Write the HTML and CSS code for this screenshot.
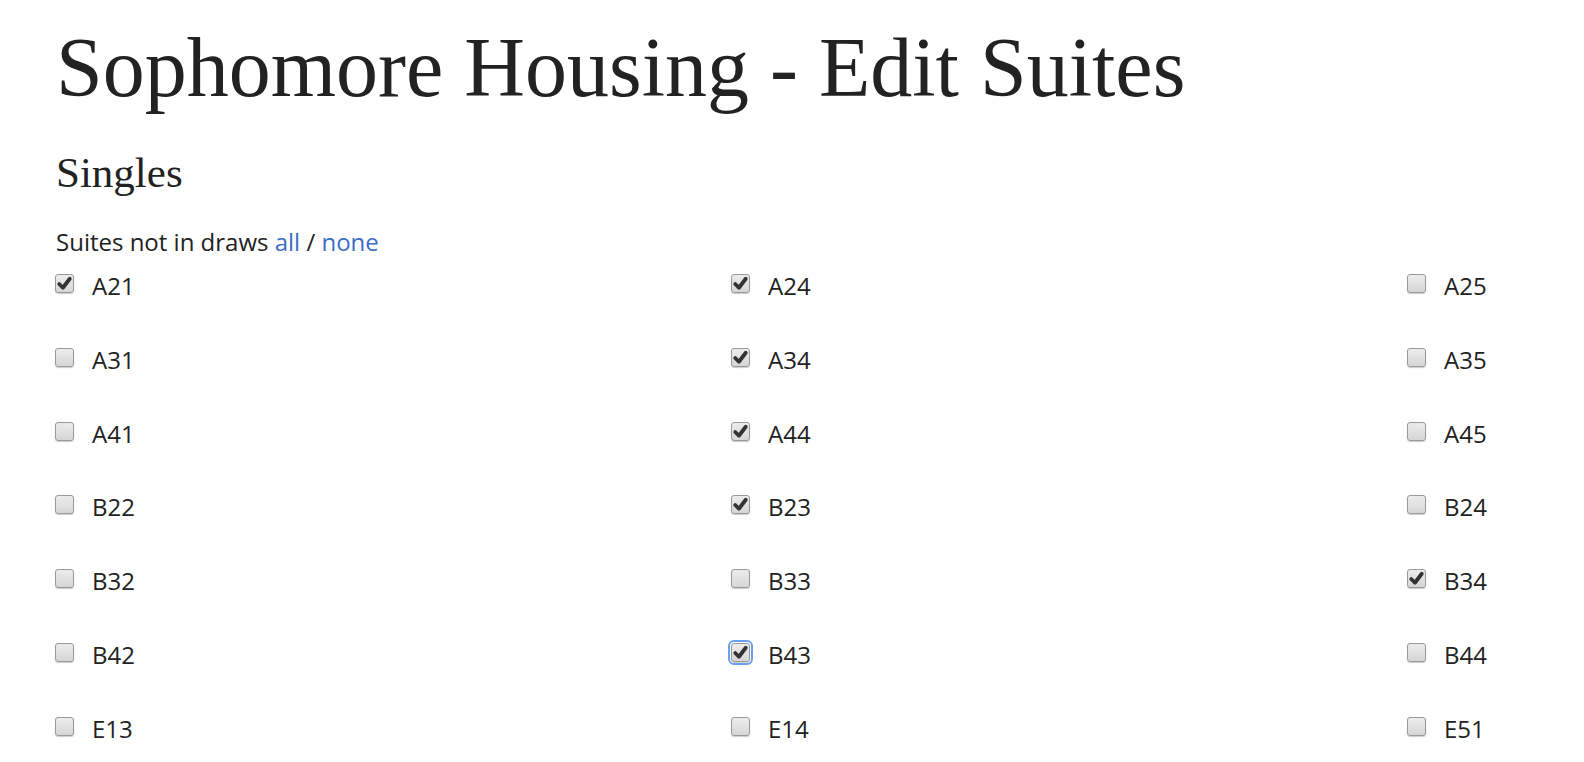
FILE: index.html
```html
<!DOCTYPE html>
<html>
<head>
<meta charset="utf-8">
<title>Sophomore Housing - Edit Suites</title>
<link rel="stylesheet" href="styles.css">
</head>
<body>
<div class="page">
  <h1 class="title">Sophomore Housing - Edit Suites</h1>
  <h2 class="section">Singles</h2>
  <p class="filter">Suites not in draws <a href="#">all</a> / <a href="#">none</a></p>
  <div class="suites">
    <label class="item"><span class="box on"><svg viewBox="0 0 18 18"><path d="M4 9.5 L7.5 13 L14 4.5" /></svg></span><span class="name">A21</span></label>
    <label class="item"><span class="box on"><svg viewBox="0 0 18 18"><path d="M4 9.5 L7.5 13 L14 4.5" /></svg></span><span class="name">A24</span></label>
    <label class="item"><span class="box"></span><span class="name">A25</span></label>

    <label class="item"><span class="box"></span><span class="name">A31</span></label>
    <label class="item"><span class="box on"><svg viewBox="0 0 18 18"><path d="M4 9.5 L7.5 13 L14 4.5" /></svg></span><span class="name">A34</span></label>
    <label class="item"><span class="box"></span><span class="name">A35</span></label>

    <label class="item"><span class="box"></span><span class="name">A41</span></label>
    <label class="item"><span class="box on"><svg viewBox="0 0 18 18"><path d="M4 9.5 L7.5 13 L14 4.5" /></svg></span><span class="name">A44</span></label>
    <label class="item"><span class="box"></span><span class="name">A45</span></label>

    <label class="item"><span class="box"></span><span class="name">B22</span></label>
    <label class="item"><span class="box on"><svg viewBox="0 0 18 18"><path d="M4 9.5 L7.5 13 L14 4.5" /></svg></span><span class="name">B23</span></label>
    <label class="item"><span class="box"></span><span class="name">B24</span></label>

    <label class="item"><span class="box"></span><span class="name">B32</span></label>
    <label class="item"><span class="box"></span><span class="name">B33</span></label>
    <label class="item"><span class="box on"><svg viewBox="0 0 18 18"><path d="M4 9.5 L7.5 13 L14 4.5" /></svg></span><span class="name">B34</span></label>

    <label class="item"><span class="box"></span><span class="name">B42</span></label>
    <label class="item"><span class="box on focus"><svg viewBox="0 0 18 18"><path d="M4 9.5 L7.5 13 L14 4.5" /></svg></span><span class="name">B43</span></label>
    <label class="item"><span class="box"></span><span class="name">B44</span></label>

    <label class="item"><span class="box"></span><span class="name">E13</span></label>
    <label class="item"><span class="box"></span><span class="name">E14</span></label>
    <label class="item"><span class="box"></span><span class="name">E51</span></label>
  </div>
</div>
</body>
</html>
```
FILE: styles.css
```css
html {
  overflow: hidden;
  background: #fff;
}
body {
  margin: 0;
  color: #222;
  font-family: "Open Sans", "Liberation Sans", sans-serif;
}
.page {
  padding-left: 56px;
}
.title {
  margin: 0;
  padding-top: 18px;
  font-family: "Liberation Serif", "Times New Roman", serif;
  font-weight: normal;
  font-size: 84px;
  line-height: 100px;
  color: #222;
}
.section {
  margin: 30px 0 0;
  font-family: "Liberation Serif", "Times New Roman", serif;
  font-weight: normal;
  font-size: 43px;
  line-height: 50px;
  color: #222;
}
.filter {
  margin: 29px 0 0;
  font-size: 24px;
  line-height: 30px;
}
.filter a {
  color: #3a6fc4;
  text-decoration: none;
}
.suites {
  margin-top: 14px;
  display: grid;
  grid-template-columns: 676px 676px auto;
  grid-auto-rows: 73.8px;
}
.item {
  display: flex;
  align-items: flex-start;
  font-size: 24px;
  line-height: 30px;
}
.box {
  box-sizing: border-box;
  width: 19px;
  height: 19px;
  margin-top: 3px;
  margin-left: -1px;
  margin-right: 18px;
  border: 1px solid #999;
  border-radius: 3px;
  background: linear-gradient(#ececec, #d6d6d6);
  box-shadow: 0 1px 1px rgba(0,0,0,0.2);
  position: relative;
}
.box svg {
  position: absolute;
  left: -1px;
  top: -1px;
  width: 19px;
  height: 19px;
}
.box svg path {
  fill: none;
  stroke: #333;
  stroke-width: 3.6;
  stroke-linecap: round;
  stroke-linejoin: round;
}
.box.focus {
  outline: 2px solid #6aa0f0;
  outline-offset: 1px;
}
.name {
  color: #222;
}
```
